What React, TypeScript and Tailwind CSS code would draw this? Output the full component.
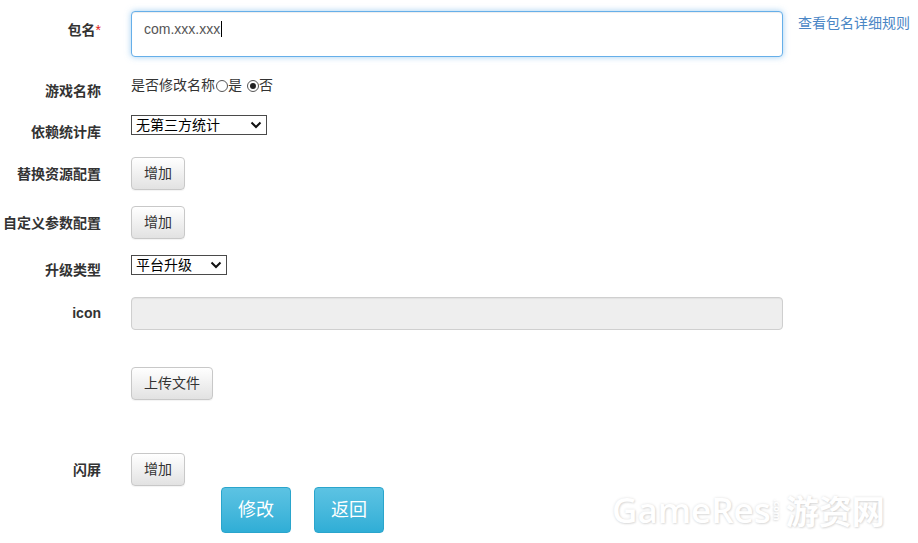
import React from "react";

const cjk = { fontFamily: '"Liberation Sans", "Noto Sans CJK SC", sans-serif' };

function Label({ text, pt, star }: { text: string; pt: string; star?: boolean }) {
  return (
    <div className={`w-[101px] shrink-0 text-right text-[14px] leading-[18px] font-bold text-[#333] ${pt}`}>
      {text}
      {star && <span className="text-[#e02020] font-normal">*</span>}
    </div>
  );
}

function GrayButton({ children, w }: { children: React.ReactNode; w: string }) {
  return (
    <button
      className={`${w} h-[33px] rounded-[4px] border border-[#c8c8c8] bg-gradient-to-b from-white to-[#e2e2e2] text-[14px] text-[#333] shadow-[0_1px_1px_rgba(0,0,0,0.05)]`}
    >
      {children}
    </button>
  );
}

function Select({ text, w }: { text: string; w: string }) {
  return (
    <div className={`relative ${w} h-[20px] border border-[#4a4a4a] bg-white`}>
      <div className="pl-[4px] text-[14px] leading-[18px] text-black">{text}</div>
      <svg
        className="absolute right-[4px] top-[4px]"
        width="12"
        height="10"
        viewBox="0 0 12 10"
        fill="none"
      >
        <path d="M1.5 2.5 L6 7 L10.5 2.5" stroke="#111" strokeWidth="2" />
      </svg>
    </div>
  );
}

function Radio({ checked }: { checked?: boolean }) {
  return (
    <span className="inline-flex h-[12px] w-[12px] items-center justify-center rounded-full border border-[#555] bg-white align-middle">
      {checked && <span className="h-[6px] w-[6px] rounded-full bg-[#222]" />}
    </span>
  );
}

export default function App() {
  return (
    <div className="relative h-[543px] w-[918px] overflow-hidden bg-white" style={cjk}>
      <div className="flex flex-col">
        {/* 包名 */}
        <div className="mt-[11px] flex h-[46px]">
          <Label text="包名" pt="pt-[10px]" star />
          <div className="ml-[30px] flex h-[46px] w-[652px] items-start rounded-[4px] border border-[#66afe9] bg-white pl-[12px] pt-[8px] shadow-[inset_0_1px_1px_rgba(0,0,0,0.075),0_0_6px_rgba(102,175,233,0.6)]">
            <span className="text-[14px] leading-[18px] text-[#555]" style={{ fontFamily: '"Liberation Sans", Arial, sans-serif' }}>
              com.xxx.xxx
            </span>
            <span className="ml-[1px] mt-[1px] h-[16px] w-[1px] bg-black" />
          </div>
          <div className="ml-[15px] pt-[3px] text-[14px] leading-[18px] text-[#4a86c5]">查看包名详细规则</div>
        </div>

        {/* 游戏名称 */}
        <div className="mt-[19px] flex h-[18px]">
          <Label text="游戏名称" pt="pt-[6px]" />
          <div className="ml-[30px] flex items-center text-[14px] leading-[18px] text-[#333]">
            <span>是否修改名称</span>
            <span className="ml-[1px]"><Radio /></span>
            <span>是</span>
            <span className="ml-[5px]"><Radio checked /></span>
            <span>否</span>
          </div>
        </div>

        {/* 依赖统计库 */}
        <div className="mt-[21px] flex h-[20px]">
          <Label text="依赖统计库" pt="pt-[8px]" />
          <div className="ml-[30px]">
            <Select text="无第三方统计" w="w-[136px]" />
          </div>
        </div>

        {/* 替换资源配置 */}
        <div className="mt-[22px] flex h-[33px]">
          <Label text="替换资源配置" pt="pt-[8px]" />
          <div className="ml-[30px]">
            <GrayButton w="w-[54px]">增加</GrayButton>
          </div>
        </div>

        {/* 自定义参数配置 */}
        <div className="mt-[16px] flex h-[33px]">
          <Label text="自定义参数配置" pt="pt-[8px]" />
          <div className="ml-[30px]">
            <GrayButton w="w-[54px]">增加</GrayButton>
          </div>
        </div>

        {/* 升级类型 */}
        <div className="mt-[16px] flex h-[20px]">
          <Label text="升级类型" pt="pt-[6px]" />
          <div className="ml-[30px]">
            <Select text="平台升级" w="w-[96px]" />
          </div>
        </div>

        {/* icon */}
        <div className="mt-[22px] flex h-[33px]">
          <Label text="icon" pt="pt-[7px]" />
          <div className="ml-[30px] h-[33px] w-[652px] rounded-[4px] border border-[#cfcfcf] bg-[#eeeeee] shadow-[inset_0_1px_1px_rgba(0,0,0,0.05)]" />
        </div>

        {/* 上传文件 */}
        <div className="mt-[37px] flex h-[33px]">
          <div className="w-[101px] shrink-0" />
          <div className="ml-[30px]">
            <GrayButton w="w-[82px]">上传文件</GrayButton>
          </div>
        </div>

        {/* 闪屏 */}
        <div className="mt-[53px] flex h-[33px]">
          <Label text="闪屏" pt="pt-[8px]" />
          <div className="ml-[30px]">
            <GrayButton w="w-[54px]">增加</GrayButton>
          </div>
        </div>

        {/* actions */}
        <div className="mt-[1px] flex h-[46px] pl-[221px] gap-[23px]">
          <button className="h-[46px] w-[70px] rounded-[4px] border border-[#2aa5cc] bg-gradient-to-b from-[#5cc3e3] to-[#2faed6] text-[18px] text-white">
            修改
          </button>
          <button className="h-[46px] w-[70px] rounded-[4px] border border-[#2aa5cc] bg-gradient-to-b from-[#5cc3e3] to-[#2faed6] text-[18px] text-white">
            返回
          </button>
        </div>
      </div>

      {/* watermark */}
      <div
        className="absolute left-[612px] top-[488px] flex items-center text-white"
        style={{ textShadow: "0 0 3px rgba(0,0,0,0.12), 1px 1px 2px rgba(0,0,0,0.1)" }}
      >
        <span className="text-[35px] font-semibold leading-[44px]" style={{ fontFamily: '"Open Sans", sans-serif' }}>
          GameRes
        </span>
        <span
          className="ml-[1px] text-[9px] font-bold leading-[10px] [writing-mode:vertical-rl]"
          style={{ fontFamily: '"Open Sans", sans-serif' }}
        >
          .com
        </span>
        <span className="ml-[4px] text-[33px] font-bold leading-[44px]" style={{ fontFamily: '"Noto Sans CJK SC", sans-serif' }}>
          游资网
        </span>
      </div>
    </div>
  );
}
